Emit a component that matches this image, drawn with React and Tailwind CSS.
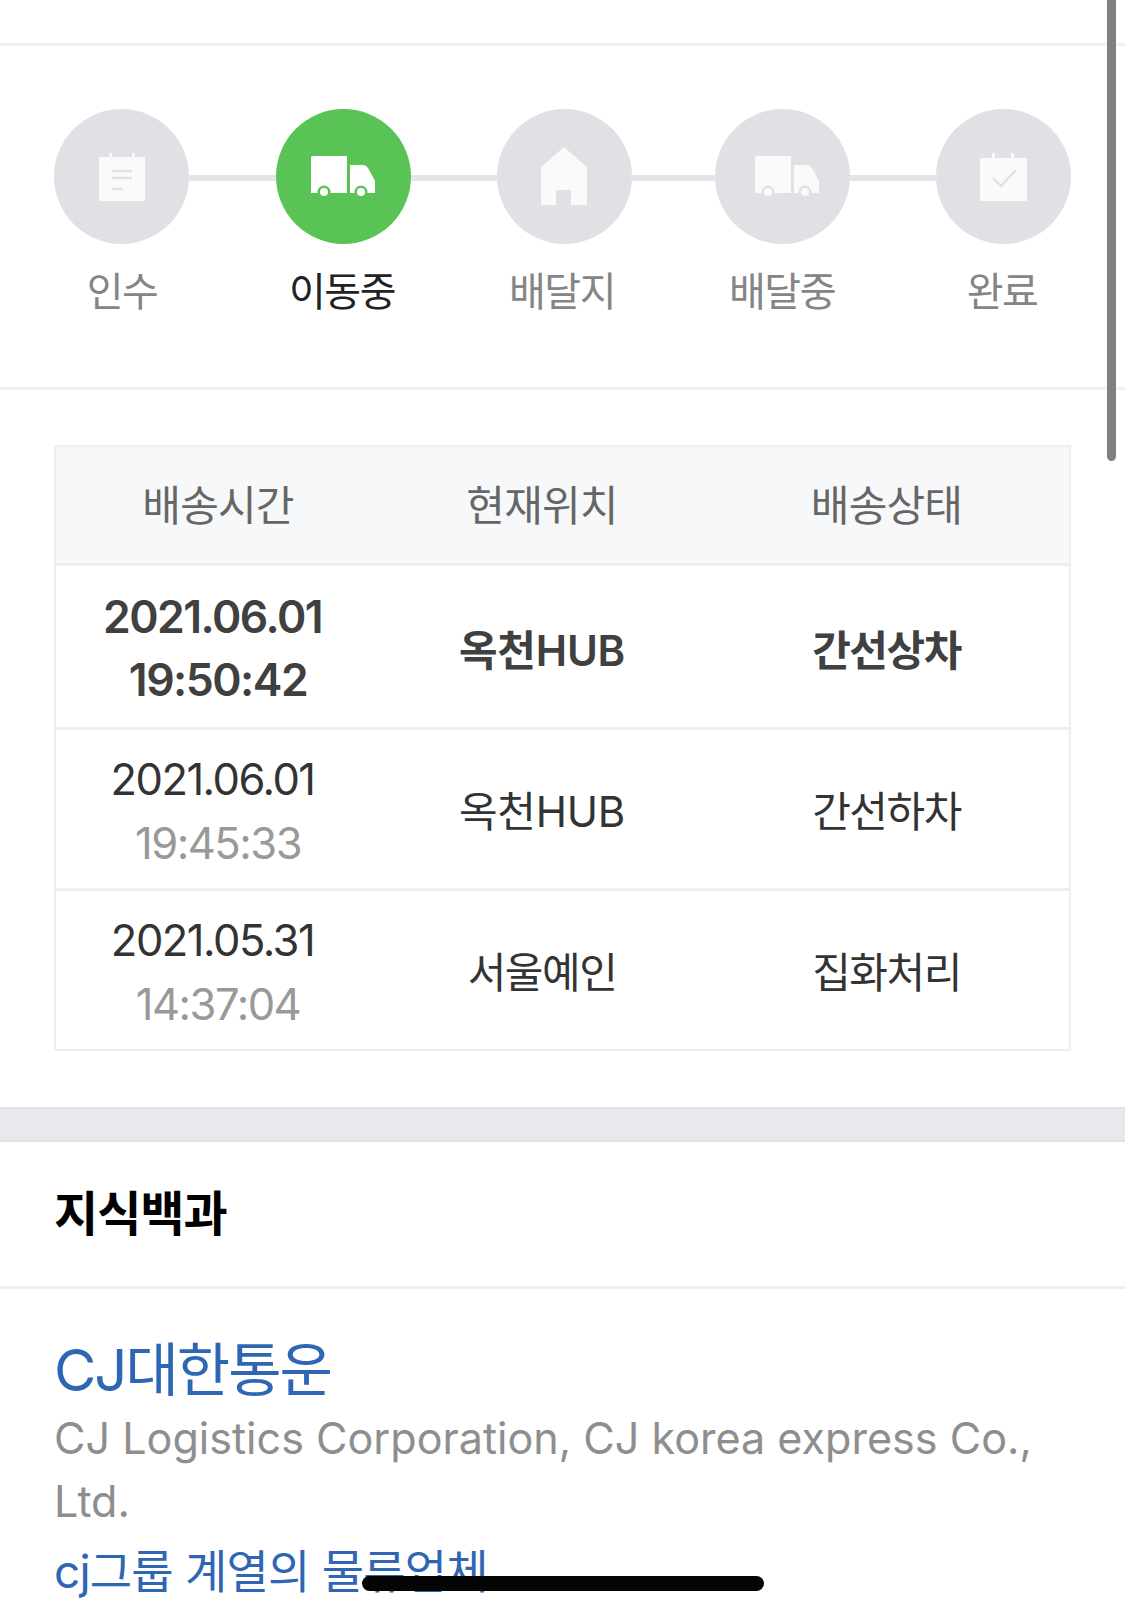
const FONT = "font-['Inter','Noto_Sans_CJK_KR',sans-serif]";

const Doc = () => (
    <svg width="46" height="48" viewBox="0 0 46 48">
        <path d="M0 4H10V0H13V4H33V0H36V4H46V48H0Z" fill="#fafafa" />
        <path d="M13 18H33M13 25H33M13 36H23" stroke="#e0e1e5" strokeWidth="2.4" />
    </svg>
);

const Truck = ({ bg, fg }) => (
    <svg width="64" height="42" viewBox="0 0 64 42">
        <path d="M1 0H36V37H0V1Z" fill={fg} />
        <path d="M39 9H52Q55 9 57 12L64 25V37H39Z" fill={fg} />
        <circle cx="13" cy="36" r="6.5" fill={bg} />
        <circle cx="13" cy="36" r="4" fill={fg} />
        <circle cx="50" cy="36" r="6.5" fill={bg} />
        <circle cx="50" cy="36" r="4" fill={fg} />
    </svg>
);

const Home = () => (
    <svg width="46" height="59" viewBox="0 0 46 59">
        <path d="M23 0L46 20V58H30V43H15V58H0V20Z" fill="#fafafa" />
    </svg>
);

const CalendarCheck = () => (
    <svg width="47" height="48" viewBox="0 0 47 48">
        <path d="M0 5H12V0H15V5H31V0H34V5H47V48H0Z" fill="#fafafa" />
        <path d="M13 25L21 33L36 17" fill="none" stroke="#e0e1e5" strokeWidth="2.4" />
    </svg>
);

const Circle = ({ active, children }) => (
    <div
        className={`w-[135px] h-[135px] shrink-0 rounded-full flex items-center justify-center ${
            active ? "bg-[#5ac356]" : "bg-[#e0e1e5]"
        }`}>
        {children}
    </div>
);

const Line = ({ width }) => (
    <div className={`h-[6px] mt-[3px] bg-[#e4e5ea] ${width}`}></div>
);

const rows = [
    { date: "2021.06.01", time: "19:50:42", place: "옥천HUB", status: "간선상차", bold: true },
    { date: "2021.06.01", time: "19:45:33", place: "옥천HUB", status: "간선하차" },
    { date: "2021.05.31", time: "14:37:04", place: "서울예인", status: "집화처리" },
];

const App = () => {
    return (
        <div className={`relative h-[1614px] w-[1125px] overflow-hidden bg-white ${FONT}`}>
            {/* Steps */}
            <div className="mt-[43px] border-y-[3px] border-[#f0f0f2] h-[347px] px-[54px] pt-[63px]">
                <div className="flex items-center">
                    <Circle><Doc /></Circle>
                    <Line width="w-[87px]" />
                    <Circle active><Truck bg="#5ac356" fg="#ffffff" /></Circle>
                    <Line width="w-[86px]" />
                    <Circle><Home /></Circle>
                    <Line width="w-[84px]" />
                    <Circle>
                        <div className="ml-[8px]"><Truck bg="#e0e1e5" fg="#fafafa" /></div>
                    </Circle>
                    <Line width="w-[86px]" />
                    <Circle><CalendarCheck /></Circle>
                </div>
                <div className="mt-[23px] -ml-[42px] flex text-[40px] leading-[50px] tracking-[-1.5px] text-[#858585] text-center">
                    <span className="w-[220px] shrink-0">인수</span>
                    <span className="w-[220px] shrink-0 text-[#222222]">이동중</span>
                    <span className="w-[220px] shrink-0">배달지</span>
                    <span className="w-[220px] shrink-0">배달중</span>
                    <span className="w-[220px] shrink-0">완료</span>
                </div>
            </div>

            {/* Table */}
            <div className="mx-[54px] mt-[55px] border-2 border-[#eeeef0]">
                <div className="grid grid-cols-[324px_324px_1fr] h-[116px] items-center text-center bg-[#f7f8fa] text-[42px] tracking-[-0.8px] text-[#666666]">
                    <span>배송시간</span>
                    <span>현재위치</span>
                    <span>배송상태</span>
                </div>
                {rows.map((row) => (
                    <div
                        key={row.time}
                        className={`grid grid-cols-[324px_324px_1fr] items-center text-center border-t-[3px] border-[#eeeef0] text-[#333333] text-[42px] tracking-[-1.5px] ${
                            row.bold ? "h-[164px] pt-[4px] font-semibold text-[#404040]" : "h-[161px] pt-[4px]"
                        }`}>
                        <div className={row.bold ? "text-[44.5px] leading-[63px]" : "text-[43.5px] leading-[64px]"}>
                            <div className="pr-[11px]">{row.date}</div>
                            <div className={row.bold ? "" : "text-[#999999]"}>{row.time}</div>
                        </div>
                        <span className={`${row.place.includes("HUB") ? "tracking-[-0.2px]" : ""} ${row.bold ? "mt-[4px]" : ""}`}>{row.place}</span>
                        <span className={row.bold ? "mt-[4px]" : ""}>{row.status}</span>
                    </div>
                ))}
            </div>

            {/* Band */}
            <div className="mt-[56px] h-[35px] bg-[#e8e9ed] border-y-2 border-[#e0e1e5]"></div>

            {/* Encyclopedia */}
            <div className="h-[147px] flex items-center px-[54px] border-b-[3px] border-[#eeeef0]">
                <h2 className="text-[48px] font-bold tracking-[-1px] text-black">지식백과</h2>
            </div>
            <div className="px-[54px] pt-[46px]">
                <div className="text-[58px] leading-[70px] tracking-[-2px] text-[#2e66b4]">CJ대한통운</div>
                <p className="text-[43.1px] leading-[63px] text-[#8e8e8e] mt-[2px]">
                    CJ Logistics Corporation, CJ korea express Co., Ltd.
                </p>
                <div className="text-[46px] leading-[63px] tracking-[-0.8px] text-[#2e66b4] mt-[7px]">cj그룹 계열의 물류업체</div>
            </div>

            {/* Scrollbar and home indicator */}
            <div className="absolute right-[9px] top-0 w-[9px] h-[461px] rounded-b-full bg-[#808080]"></div>
            <div className="absolute left-[362px] top-[1576px] w-[402px] h-[15px] rounded-full bg-[#050505]"></div>
        </div>
    );
};

export default App;
